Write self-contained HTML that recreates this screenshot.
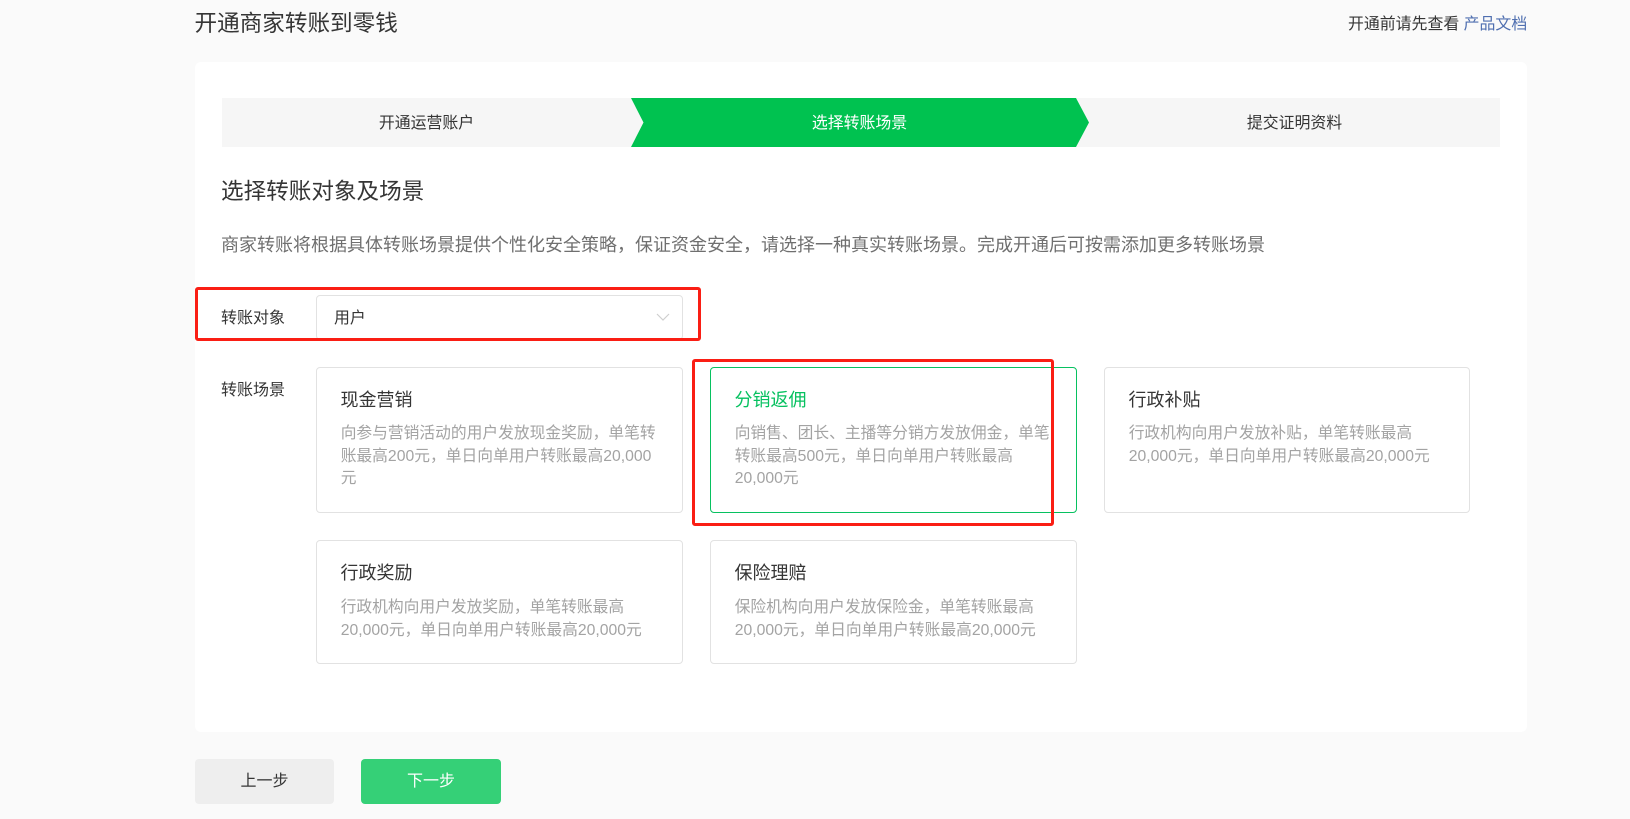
<!DOCTYPE html>
<html lang="zh-CN"><head><meta charset="utf-8"><title>开通商家转账到零钱</title>
<style>
*{box-sizing:border-box;margin:0;padding:0}
html,body{width:1630px;height:819px;overflow:hidden;background:#fafafa}
body{position:relative;font-family:"Liberation Sans","Noto Sans CJK SC",sans-serif;color:#353535}
.a{position:absolute;white-space:nowrap}
.panel{position:absolute;left:195px;top:62px;width:1332px;height:670px;background:#fff;border-radius:6px}
.step{position:absolute;top:98px;height:49px;line-height:51px;text-align:center;font-size:15.9px}
.card{position:absolute;width:367px;border:1px solid #e2e2e2;border-radius:4px;background:#fff}
.card h4{position:absolute;left:23.500px;top:19px;font-size:18px;font-weight:400;line-height:26px;color:#353535;white-space:nowrap}
.card p{position:absolute;left:23.700px;top:55.300px;font-size:15.75px;line-height:22.4px;color:#a3a3a3;white-space:nowrap}
.r2 h4{top:19px}.r2 p{top:56.300px}
.card.on{border-color:#07c160}.card.on h4{color:#07c160}
.red{position:absolute;border:3px solid #fa1e14;border-radius:3px;z-index:5}
.btn{position:absolute;top:759px;height:45px;line-height:46px;border-radius:4px;text-align:center;font-size:16px}
</style></head><body>
<div class="a" style="left:194.500px;top:8px;font-size:22.6px;line-height:32px;color:#353535">开通商家转账到零钱</div>
<div class="a" style="left:1348px;top:13px;font-size:15.9px;line-height:24px;color:#353535">开通前请先查看 <span style="color:#4f6fb0">产品文档</span></div>
<div class="panel"></div>
<div class="step" style="left:222px;width:1278px;background:#f6f6f6"></div>
<svg class="a" style="left:631px;top:98px" width="458" height="49" viewBox="0 0 458 49"><path d="M0 0H445L458 24.5L445 49H0L12.500 24.500Z" fill="#00c250"/></svg>
<div class="step" style="left:222px;width:409px">开通运营账户</div>
<div class="step" style="left:643px;width:433px;color:#fff">选择转账场景</div>
<div class="step" style="left:1089px;width:411px">提交证明资料</div>
<div class="a" style="left:221px;top:176px;font-size:22.6px;line-height:32px;color:#353535">选择转账对象及场景</div>
<div class="a" style="left:221px;top:232px;font-size:18px;line-height:26px;color:#6f6f6f">商家转账将根据具体转账场景提供个性化安全策略，保证资金安全，请选择一种真实转账场景。完成开通后可按需添加更多转账场景</div>
<div class="a" style="left:221px;top:306px;font-size:16px;line-height:26px">转账对象</div>
<div class="a" style="left:316px;top:295px;width:367px;height:45px;border:1px solid #e2e2e2;border-radius:4px;background:#fff"></div>
<div class="a" style="left:334px;top:306px;font-size:15.9px;line-height:26px">用户</div>
<svg class="a" style="left:656px;top:312px" width="14" height="10" viewBox="0 0 14 10"><path d="M1 2L7 8L13 2" fill="none" stroke="#cfcfcf" stroke-width="1.200"/></svg>
<div class="a" style="left:221px;top:378px;font-size:16px;line-height:26px">转账场景</div>
<div class="card" style="left:316px;top:367px;height:146px"><h4>现金营销</h4><p>向参与营销活动的用户发放现金奖励，单笔转<br>账最高200元，单日向单用户转账最高20,000<br>元</p></div>
<div class="card on" style="left:710px;top:367px;height:146px"><h4>分销返佣</h4><p>向销售、团长、主播等分销方发放佣金，单笔<br>转账最高500元，单日向单用户转账最高<br>20,000元</p></div>
<div class="card" style="left:1104px;top:367px;width:366px;height:146px"><h4>行政补贴</h4><p>行政机构向用户发放补贴，单笔转账最高<br>20,000元，单日向单用户转账最高20,000元</p></div>
<div class="card r2" style="left:316px;top:540px;height:124px"><h4>行政奖励</h4><p>行政机构向用户发放奖励，单笔转账最高<br>20,000元，单日向单用户转账最高20,000元</p></div>
<div class="card r2" style="left:710px;top:540px;height:124px"><h4>保险理赔</h4><p>保险机构向用户发放保险金，单笔转账最高<br>20,000元，单日向单用户转账最高20,000元</p></div>
<div class="red" style="left:195px;top:287px;width:506px;height:54px"></div>
<div class="red" style="left:692px;top:359px;width:362px;height:167px"></div>
<div class="btn" style="left:195px;width:139px;background:#eee;color:#353535">上一步</div>
<div class="btn" style="left:361px;width:140px;background:#35d077;color:#fff">下一步</div>
</body></html>
